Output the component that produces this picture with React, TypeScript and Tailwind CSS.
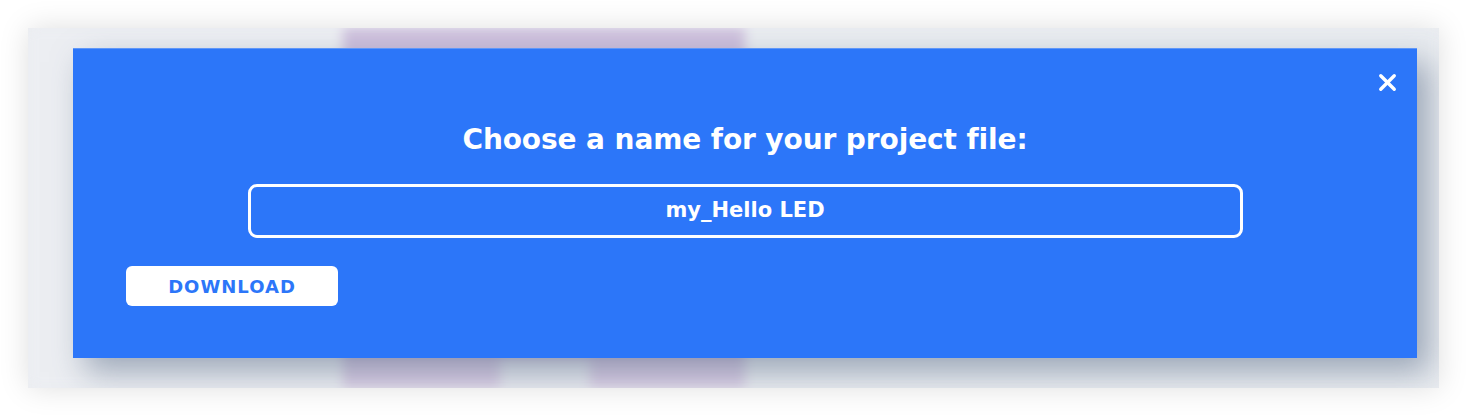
import { X } from "lucide-react"

const FONT = "font-['DejaVu_Sans','Liberation_Sans',sans-serif]"

function BlurredWorkspace() {
  // the editor behind the dialog, softened by the backdrop blur
  return (
    <div className="absolute inset-0 flex blur-[6px]">
      <div className="w-[315px] bg-[#eceef2]" />
      <div className="flex w-[402px] flex-col bg-[#cdbfdc]">
        <div className="flex-1" />
        <div className="flex h-[30px]">
          <div className="w-[157px] bg-[#d9cce3]" />
          <div className="w-[90px] bg-[#e6e8ee]" />
          <div className="flex-1 bg-[#d9cce3]" />
        </div>
      </div>
      <div className="flex-1 bg-[#e9ecf0]" />
    </div>
  )
}

export default function App() {
  return (
    <div className={`h-[416px] w-[1467px] bg-white p-[28px] ${FONT}`}>
      <div className="relative h-[360px] w-[1411px] overflow-hidden bg-[#eceef2] shadow-[0_0_28px_rgba(0,0,0,0.13)]">
        <BlurredWorkspace />

        <div className="absolute left-[45px] top-[20px] flex h-[310px] w-[1344px] flex-col border-t border-[#5f97f8] bg-[#2c76f9] px-[53px] shadow-[12px_14px_30px_rgba(80,100,130,0.5)]">
          <button className="absolute right-[16px] top-[20px] text-white">
            <X className="h-[27px] w-[27px]" strokeWidth={3} />
          </button>

          <h2 className="mt-[73px] text-center text-[28px] font-bold leading-[36px] tracking-[-0.1px] text-white">
            Choose a name for your project file:
          </h2>

          <div className="mx-auto mt-[26px] flex h-[54px] w-[995px] items-center justify-center rounded-[9px] border-[3px] border-white">
            <span className="text-[21px] font-bold text-white">my_Hello LED</span>
          </div>

          <button className="mt-[28px] flex h-[40px] w-[212px] items-center justify-center rounded-[6px] bg-white text-[18px] font-bold tracking-[1px] text-[#2c76f9]">
            DOWNLOAD
          </button>
        </div>
      </div>
    </div>
  )
}
